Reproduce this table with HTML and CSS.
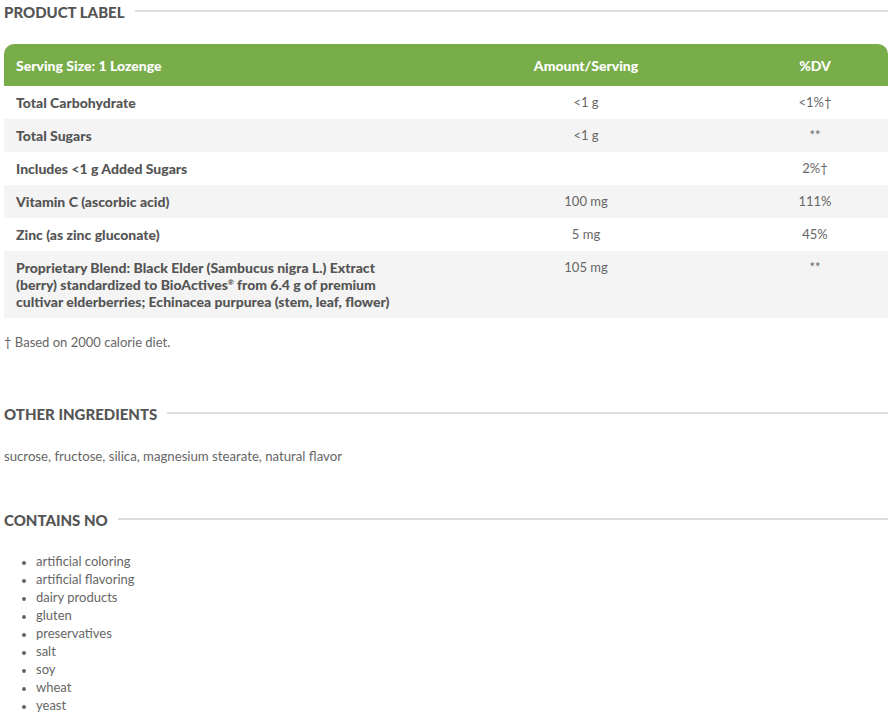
FILE: index.html
```html
<!DOCTYPE html>
<html lang="en">
<head>
<meta charset="utf-8">
<title>Product Label</title>
<link rel="stylesheet" href="styles.css">
</head>
<body>
<div class="page">
  <section class="section section-label">
    <h2 class="heading"><span class="heading-text">PRODUCT LABEL</span><span class="heading-line"></span></h2>
    <div class="facts">
      <div class="row row-head">
        <div class="cell cell-name">Serving Size: 1 Lozenge</div>
        <div class="cell cell-num">Amount/Serving</div>
        <div class="cell cell-num">%DV</div>
      </div>
      <div class="row">
        <div class="cell cell-name">Total Carbohydrate</div>
        <div class="cell cell-num">&lt;1 g</div>
        <div class="cell cell-num">&lt;1%†</div>
      </div>
      <div class="row row-alt">
        <div class="cell cell-name">Total Sugars</div>
        <div class="cell cell-num">&lt;1 g</div>
        <div class="cell cell-num">**</div>
      </div>
      <div class="row">
        <div class="cell cell-name">Includes &lt;1 g Added Sugars</div>
        <div class="cell cell-num"></div>
        <div class="cell cell-num">2%†</div>
      </div>
      <div class="row row-alt">
        <div class="cell cell-name">Vitamin C (ascorbic acid)</div>
        <div class="cell cell-num">100 mg</div>
        <div class="cell cell-num">111%</div>
      </div>
      <div class="row">
        <div class="cell cell-name">Zinc (as zinc gluconate)</div>
        <div class="cell cell-num">5 mg</div>
        <div class="cell cell-num">45%</div>
      </div>
      <div class="row row-alt row-tall">
        <div class="cell cell-name">Proprietary Blend: Black Elder (Sambucus nigra L.) Extract<br>(berry) standardized to BioActives<sup>®</sup> from 6.4 g of premium<br>cultivar elderberries; Echinacea purpurea (stem, leaf, flower)</div>
        <div class="cell cell-num">105 mg</div>
        <div class="cell cell-num">**</div>
      </div>
    </div>
    <p class="footnote">† Based on 2000 calorie diet.</p>
  </section>

  <section class="section section-ingredients">
    <h2 class="heading"><span class="heading-text">OTHER INGREDIENTS</span><span class="heading-line"></span></h2>
    <p class="body-text">sucrose, fructose, silica, magnesium stearate, natural flavor</p>
  </section>

  <section class="section section-contains">
    <h2 class="heading"><span class="heading-text">CONTAINS NO</span><span class="heading-line"></span></h2>
    <ul class="list">
      <li>artificial coloring</li>
      <li>artificial flavoring</li>
      <li>dairy products</li>
      <li>gluten</li>
      <li>preservatives</li>
      <li>salt</li>
      <li>soy</li>
      <li>wheat</li>
      <li>yeast</li>
    </ul>
  </section>
</div>
</body>
</html>
```

FILE: styles.css
```css
html, body {
  margin: 0;
  padding: 0;
  background: #ffffff;
}

body {
  font-family: Lato, "Open Sans", Arial, sans-serif;
  color: #666666;
}

.page {
  padding: 0 7px 0 4px;
}

.heading {
  display: flex;
  align-items: center;
  gap: 10px;
  margin: 0;
  height: 24px;
  font-size: 15px;
  font-weight: 900;
  color: #555555;
}

.heading-text {
  white-space: nowrap;
}

.heading-line {
  flex: 1;
  height: 2px;
  background: #dddddd;
  margin-top: -2px;
}

.facts {
  margin-top: 20px;
  width: 884px;
}

.row {
  display: grid;
  grid-template-columns: 426px 312px 146px;
  min-height: 33px;
  align-items: center;
  background: #ffffff;
}

.row-alt {
  background: #f4f4f4;
}

.row-head {
  background: #78ad4a;
  min-height: 42px;
  border-radius: 10px 10px 0 0;
}

.cell {
  font-size: 13px;
  line-height: 17px;
}

.cell-name {
  padding-left: 12px;
  font-size: 14px;
  font-weight: 900;
  color: #555555;
}

.cell-num {
  text-align: center;
  color: #666666;
  font-weight: 400;
}

.row-head .cell {
  color: #ffffff;
  font-size: 14px;
  font-weight: 900;
}

.row-tall {
  align-items: start;
  padding: 8px 0;
}

sup {
  font-size: 7px;
  line-height: 0;
  vertical-align: 5px;
}

.footnote {
  margin: 15px 0 0;
  font-size: 13px;
  line-height: 18px;
  color: #666666;
}

.section-ingredients {
  margin-top: 51px;
}

.body-text {
  margin: 21px 0 0;
  font-size: 13.2px;
  line-height: 18px;
  color: #666666;
}

.section-contains {
  margin-top: 43px;
}

.list {
  margin: 20px 0 0;
  padding: 0 0 0 32px;
  font-size: 13px;
  line-height: 18px;
  color: #666666;
}

.list li::marker {
  color: #666666;
  font-size: 11px;
}
```
